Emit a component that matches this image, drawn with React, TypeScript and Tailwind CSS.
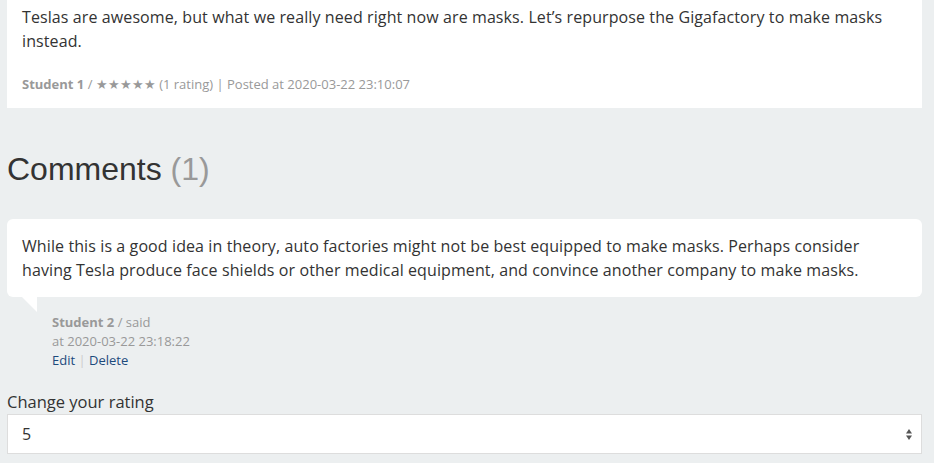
const font = "font-['Open_Sans','Lato',sans-serif]";

const Idea = () => (
  <div className="bg-white px-[15px] pt-[5px] pb-[14px]">
    <p className="text-[16px] leading-[24px] tracking-[0.1px] text-[#333]">
      Teslas are awesome, but what we really need right now are masks. Let’s repurpose the Gigafactory to make masks
      instead.
    </p>
    <p className="mt-[22px] text-[13px] leading-[19px] text-[#999]">
      <span className="font-bold">Student 1</span> / ★★★★★ (1 rating) | Posted at 2020-03-22 23:10:07
    </p>
  </div>
);

const Comment = () => (
  <div>
    <div className="relative rounded-md bg-white px-[15px] py-[15px]">
      <p className="text-[16px] leading-[24px] tracking-[0.1px] text-[#333]">
        While this is a good idea in theory, auto factories might not be best equipped to make masks. Perhaps consider
        having Tesla produce face shields or other medical equipment, and convince another company to make masks.
      </p>
      <span className="absolute left-[15px] top-full h-0 w-0 border-t-[15px] border-l-[15px] border-t-white border-l-transparent" />
    </div>
    <div className="pl-[45px] pt-[16px] text-[13px] leading-[19px] text-[#999]">
      <div>
        <span className="font-bold">Student 2</span> / said
      </div>
      <div>at 2020-03-22 23:18:22</div>
      <div>
        <a className="text-[#1d4a7c]">Edit</a> <span className="text-[#ccc]">|</span>{" "}
        <a className="text-[#1d4a7c]">Delete</a>
      </div>
    </div>
  </div>
);

export default function App() {
  return (
    <div className={`min-h-[463px] bg-[#eceff0] pl-[7px] pr-[12px] ${font}`}>
      <Idea />
      <h2 className="mt-[41px] font-['Liberation_Sans',Arial,sans-serif] text-[32px] leading-[40px] text-[#333]">
        Comments <span className="text-[#999]">(1)</span>
      </h2>
      <div className="mt-[30px]">
        <Comment />
      </div>
      <label className="mt-[21px] block text-[16.5px] leading-[22px] text-[#333]">Change your rating</label>
      <div className="relative mt-[1px] flex h-[40px] items-center border border-[#ddd] bg-white px-[14px] text-[16px] text-[#333]">
        5
        <svg className="absolute right-[8px] top-[13px]" width="8" height="13" viewBox="0 0 8 13">
          <path d="M4 1 L7 5.5 L1 5.5 Z" fill="#555" />
          <path d="M4 12 L7 7.5 L1 7.5 Z" fill="#555" />
        </svg>
      </div>
    </div>
  );
}
